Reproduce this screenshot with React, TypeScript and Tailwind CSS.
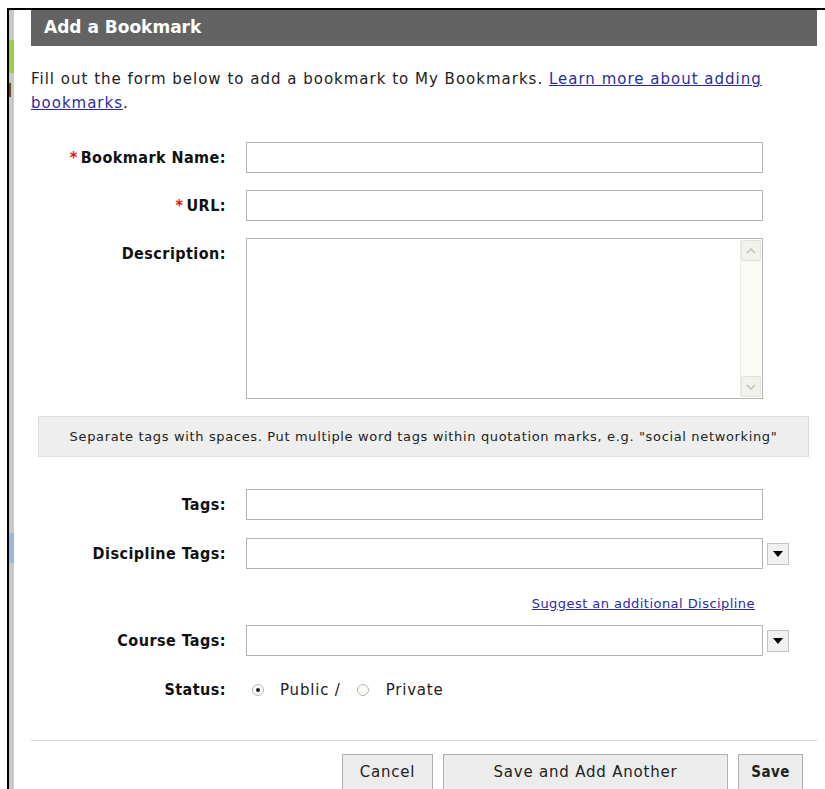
import { useState } from "react";

const font = "font-['DejaVu_Sans',sans-serif]";
const labelFont = "font-['DejaVu_Sans_Condensed','DejaVu_Sans',sans-serif]";

function FieldLabel({ text, required }: { text: string; required?: boolean }) {
  return (
    <div
      className={`w-[195px] shrink-0 text-right text-[16px] font-bold tracking-[0.45px] text-[#111] ${labelFont}`}
    >
      {required && <span className="mr-[3px] text-[#e0101a]">*</span>}
      {text}
    </div>
  );
}

function DropButton() {
  return (
    <button
      type="button"
      className="ml-[4px] flex h-[22px] w-[22px] items-center justify-center border border-[#c4c4c4] bg-[#f1f1f1]"
    >
      <svg width="10" height="6" viewBox="0 0 10 6">
        <path d="M0 0h10L5 6z" fill="#000" />
      </svg>
    </button>
  );
}

function Radio({ checked }: { checked?: boolean }) {
  return (
    <span className="inline-flex h-[12px] w-[12px] items-center justify-center rounded-full border border-[#b8b8b0] bg-[#fbfbf8]">
      {checked && <span className="h-[4px] w-[4px] rounded-full bg-[#222]" />}
    </span>
  );
}

export default function App() {
  const [status, setStatus] = useState<"public" | "private">("public");

  const inputCls =
    "h-[31px] w-[517px] border border-[#b3b3b3] bg-white px-1 text-[14px] outline-none";

  return (
    <div className={`h-[789px] w-[825px] overflow-hidden bg-white pl-[7px] pt-[8px] ${font}`}>
      <div className="flex h-full border-l-2 border-t-2 border-black">
        {/* side strip of the page behind the dialog */}
        <div className="flex w-[5px] shrink-0 flex-col bg-[#c6cacf]">
          <div className="mt-[30px] h-[33px] bg-[#9ccc4c]" />
          <div className="mt-[10px] h-[14px] w-[2px] bg-[#6b4a20]" />
          <div className="mt-[436px] h-[30px] bg-[#9bb6d6]" />
        </div>

        <div className="flex min-w-0 flex-1 flex-col">
          <div className="h-[3px] bg-[#b8b6ab]" />
          <div className="flex flex-col pl-[17px] pr-[8px]">
            <div className="flex h-[36px] items-center bg-[#636363] pl-[13px] text-[17px] font-bold text-white">
              Add a Bookmark
            </div>

            <p className="mt-[21px] text-[15px] leading-[24px] tracking-[1px] text-[#222]">
              Fill out the form below to add a bookmark to My Bookmarks.{" "}
              <a href="#" className="text-[#2c2c9e] underline">
                Learn more about adding bookmarks
              </a>
              .
            </p>

            <div className="mt-[27px] flex items-center gap-[20px]">
              <FieldLabel text="Bookmark Name:" required />
              <input className={inputCls} />
            </div>
            <div className="mt-[17px] flex items-center gap-[20px]">
              <FieldLabel text="URL:" required />
              <input className={inputCls} />
            </div>
            <div className="mt-[17px] flex items-start gap-[20px]">
              <div className="pt-[4px]">
                <FieldLabel text="Description:" />
              </div>
              <div className="flex h-[161px] w-[517px] border border-[#b3b3b3] bg-white">
                <textarea className="flex-1 resize-none p-1 text-[14px] outline-none" />
                <div className="my-[1px] mr-[1px] flex w-[21px] flex-col justify-between border-l border-[#eeeee6] bg-[#fbfbf6]">
                  <div className="flex h-[21px] items-center justify-center rounded-[2px] border border-[#e2e2da] bg-[#f2f2ec]">
                    <svg width="10" height="6" viewBox="0 0 10 6">
                      <path d="M1 5l4-4 4 4" fill="none" stroke="#c4c4bc" strokeWidth="1.6" />
                    </svg>
                  </div>
                  <div className="flex h-[21px] items-center justify-center rounded-[2px] border border-[#e2e2da] bg-[#f2f2ec]">
                    <svg width="10" height="6" viewBox="0 0 10 6">
                      <path d="M1 1l4 4 4-4" fill="none" stroke="#c4c4bc" strokeWidth="1.6" />
                    </svg>
                  </div>
                </div>
              </div>
            </div>

            <div className="ml-[7px] mr-[8px] mt-[17px] flex h-[41px] items-center justify-center border border-[#dedede] bg-[#eeeeee] text-[13px] tracking-[0.65px] text-[#222]">
              Separate tags with spaces. Put multiple word tags within quotation marks, e.g. "social networking"
            </div>

            <div className="mt-[32px] flex items-center gap-[20px]">
              <FieldLabel text="Tags:" />
              <input className={inputCls} />
            </div>
            <div className="mt-[18px] flex items-center gap-[20px]">
              <FieldLabel text="Discipline Tags:" />
              <div className="flex items-center">
                <input className={inputCls} />
                <DropButton />
              </div>
            </div>

            <div className="mt-[27px] flex justify-end pr-[62px] text-[13px] leading-[16px] tracking-[0.45px]">
              <a href="#" className="text-[#2c2c9e] underline">
                Suggest an additional Discipline
              </a>
            </div>

            <div className="mt-[13px] flex items-center gap-[20px]">
              <FieldLabel text="Course Tags:" />
              <div className="flex items-center">
                <input className={inputCls} />
                <DropButton />
              </div>
            </div>

            <div className="mt-[22px] flex items-center gap-[20px]">
              <FieldLabel text="Status:" />
              <div className="flex items-center pl-[6px] text-[15px] tracking-[0.8px] text-[#222]">
                <label className="flex items-center gap-[16px]" onClick={() => setStatus("public")}>
                  <Radio checked={status === "public"} />
                  <span>Public /</span>
                </label>
                <label className="ml-[16px] flex items-center gap-[17px]" onClick={() => setStatus("private")}>
                  <Radio checked={status === "private"} />
                  <span>Private</span>
                </label>
              </div>
            </div>

            <div className="mt-[38px] h-[1px] bg-[#d6d6d6]" />

            <div className="mt-[13px] flex justify-end gap-[10px] pr-[14px] text-[15px] tracking-[0.8px] text-[#222]">
              <button className="h-[36px] w-[91px] border border-[#b0b0b0] bg-[#ececec]">Cancel</button>
              <button className="h-[36px] w-[285px] border border-[#b0b0b0] bg-[#ececec]">
                Save and Add Another
              </button>
              <button
                className={`h-[36px] w-[65px] border border-[#b0b0b0] bg-[#ececec] font-bold tracking-[0.4px] ${labelFont}`}
              >
                Save
              </button>
            </div>
          </div>
        </div>
      </div>
    </div>
  );
}
